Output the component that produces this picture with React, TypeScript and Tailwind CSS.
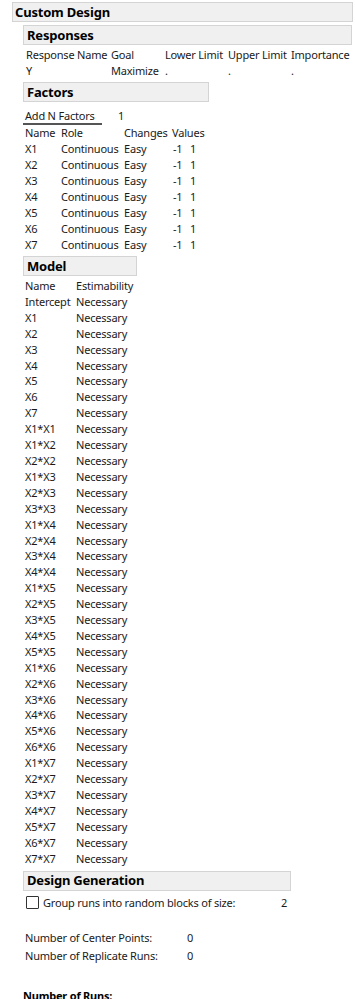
import React from "react";

const font = { fontFamily: '"Noto Sans", "Open Sans", sans-serif' };

function Header({ title, w }: { title: string; w: string }) {
  return (
    <div className={`${w} h-[20px] border border-[#d4d4d4] bg-[#f0f0f0] flex items-center pl-[3px]`}>
      <span className="text-[13px] font-bold leading-none text-black whitespace-nowrap">{title}</span>
    </div>
  );
}

const factors = ["X1", "X2", "X3", "X4", "X5", "X6", "X7"];
const terms: string[] = [];
for (let j = 1; j <= 7; j++) {
  for (let i = 1; i <= j; i++) terms.push(`X${i}*X${j}`);
}
const modelRows = ["Intercept", ...factors, ...terms];

export default function App() {
  return (
    <div className="w-[355px] h-[999px] overflow-hidden bg-white text-[11px] tracking-[-0.2px] text-[#1a1a1a] leading-[16px] whitespace-nowrap" style={font}>
      <div className="pt-[2px] pl-[12px]">
        <div className="w-[341px] h-[20px] border border-[#d4d4d4] bg-[#f0f0f0] flex items-center pl-[2px]">
          <span className="text-[13px] font-bold leading-none text-black">Custom Design</span>
        </div>
      </div>
      <div className="pl-[23px]">
        <div className="mt-[3px]">
          <Header title="Responses" w="w-[329px]" />
        </div>
        <div className="mt-[2px] pl-[3px]">
          <div className="grid grid-cols-[85px_54px_63px_63px_60px]">
            <span>Response Name</span>
            <span>Goal</span>
            <span>Lower Limit</span>
            <span>Upper Limit</span>
            <span>Importance</span>
            <span>Y</span>
            <span>Maximize</span>
            <span>.</span>
            <span>.</span>
            <span>.</span>
          </div>
        </div>
        <div className="mt-[3px]">
          <Header title="Factors" w="w-[186px]" />
        </div>
        <div className="mt-[6px] flex">
          <span className="w-[79px] border-b-[2px] border-[#555] pl-[2px] leading-[15px]">Add N Factors</span>
          <span className="ml-[16px]">1</span>
        </div>
        <div className="pl-[2px] grid grid-cols-[36px_63px_48px_40px]">
          <span>Name</span>
          <span>Role</span>
          <span>Changes</span>
          <span>Values</span>
          {factors.map((f) => (
            <React.Fragment key={f}>
              <span>{f}</span>
              <span>Continuous</span>
              <span>Easy</span>
              <span className="pl-[1px] flex">
                <span className="w-[17px]">-1</span>
                <span>1</span>
              </span>
            </React.Fragment>
          ))}
        </div>
        <div className="mt-[3px]">
          <Header title="Model" w="w-[114px]" />
        </div>
        <div className="mt-[2px] pl-[2px] grid grid-cols-[51px_80px] leading-[15.9px]">
          <span>Name</span>
          <span>Estimability</span>
          {modelRows.map((r) => (
            <React.Fragment key={r}>
              <span>{r}</span>
              <span>Necessary</span>
            </React.Fragment>
          ))}
        </div>
        <div className="mt-[4px]">
          <Header title="Design Generation" w="w-[268px]" />
        </div>
        <div className="mt-[4px] flex items-center pl-[3px] h-[16px]">
          <span className="w-[13px] h-[13px] border border-[#333] bg-white rounded-[1px]" />
          <span className="ml-[4px] w-[238px]">Group runs into random blocks of size:</span>
          <span>2</span>
        </div>
        <div className="mt-[19px] pl-[2px] grid grid-cols-[162px_20px] gap-y-[2px]">
          <span>Number of Center Points:</span>
          <span>0</span>
          <span>Number of Replicate Runs:</span>
          <span>0</span>
        </div>
        <div className="mt-[24px] font-bold text-black">Number of Runs:</div>
      </div>
    </div>
  );
}
